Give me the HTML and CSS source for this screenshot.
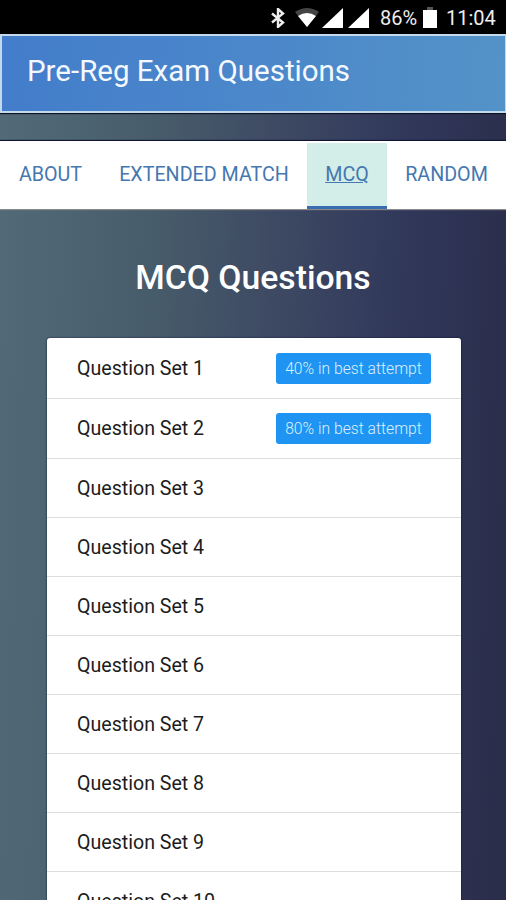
FILE: index.html
```html
<!DOCTYPE html>
<html lang="en">
<head>
  <meta charset="UTF-8" />
  <title>Pre-Reg Exam Questions</title>
  <link rel="stylesheet" href="styles.css">
</head>
<body>

<div class="statusbar">
  <svg class="bluetooth" width="14" height="20" viewBox="0 0 14 20"><path d="M1 5.5l11 9-5 4.5V1l5 4.5-11 9" fill="none" stroke="#eee" stroke-width="2.4" /></svg>
  <svg class="wifi" width="24" height="19" viewBox="0 0 24 19"><path d="M0 4Q12-4 24 4L12 19z" fill="#444" /><path d="M3 8Q12 2 21 8L12 19z" fill="#fff" /></svg>
  <svg class="signal" width="21" height="20" viewBox="0 0 21 20"><path d="M0 20L21 0v20z" fill="#fff" /></svg>
  <svg class="signal" width="21" height="20" viewBox="0 0 21 20"><path d="M0 20L21 0v20z" fill="#fff" /></svg>
  <span class="percent">86%</span>
  <svg class="battery" width="14" height="21" viewBox="0 0 14 21"><path d="M4 0h6v3H4z" fill="#555" /><path d="M0 3h14v18H0z" fill="#fff" /></svg>
  <span class="clock">11:04</span>
</div>

<header>Pre-Reg Exam Questions</header>

<nav>
  <a class="tab about">ABOUT</a>
  <a class="tab match">EXTENDED MATCH</a>
  <a class="tab mcq active">MCQ</a>
  <a class="tab random">RANDOM</a>
</nav>

<h1>MCQ Questions</h1>

<ul class="sets">
  <li class="tried">Question Set 1 <span class="badge">40% in best attempt</span></li>
  <li class="tried">Question Set 2 <span class="badge">80% in best attempt</span></li>
  <li>Question Set 3</li>
  <li>Question Set 4</li>
  <li>Question Set 5</li>
  <li>Question Set 6</li>
  <li>Question Set 7</li>
  <li>Question Set 8</li>
  <li>Question Set 9</li>
  <li>Question Set 10</li>
</ul>

</body>
</html>
```
FILE: styles.css
```css
* {
  box-sizing: border-box;
}
html {
  height: 900px;
  overflow: hidden;
}
body {
  margin: 0;
  height: 900px;
  overflow: hidden;
  font-family: Roboto, sans-serif;
  background: linear-gradient(92deg, #526b77 0%, #475c6b 30%, #3e4a63 52%, #30375a 78%, #2a2d49 100%);
}
.statusbar {
  display: flex;
  align-items: center;
  height: 34px;
  padding: 1px 0 0 271px;
  background: #000;
  color: #eee;
  font-size: 20px;
  white-space: nowrap;
}
.wifi {
  margin-left: 10px;
}
.signal {
  margin-left: 3px;
}
.signal + .signal {
  margin-left: 5px;
}
.percent {
  margin-left: 11px;
  width: 38px;
}
.battery {
  margin-left: 5px;
}
.clock {
  margin-left: 9px;
}
header {
  display: flex;
  align-items: center;
  height: 79px;
  padding: 0 25px 6px;
  border: 2px solid #c3d9ec;
  border-right-width: 1px;
  background: linear-gradient(95deg, #437dcb, #4b87ca 50%, #5493c8);
  box-shadow: 0 1px 1px #101426;
  color: #f4f9ff;
  font-size: 29.5px;
}
nav {
  display: flex;
  height: 68px;
  margin-top: 28px;
  background: #fff;
  box-shadow: 0 -1px 1px #111535, 0 1px 1px #888;
}
.tab {
  padding-top: 22px;
  height: 67px;
  color: #4577b0;
  font-size: 19.7px;
  line-height: 23px;
  text-align: center;
  white-space: nowrap;
}
.about {
  width: 101px;
}
.match {
  width: 206px;
}
.mcq {
  width: 80px;
}
.random {
  width: 119px;
}
.active {
  margin-top: 2px;
  padding-top: 20px;
  height: 66px;
  background: #d3ede8;
  border-bottom: 3px solid #3a6db0;
  text-decoration: underline;
}
h1 {
  margin: 49px 0 40px;
  color: #fff;
  font-size: 33.7px;
  font-weight: 500;
  line-height: 40px;
  text-align: center;
}
.sets {
  width: 414px;
  margin: 0 0 0 47px;
  padding: 0;
  list-style: none;
  background: #fff;
  border-radius: 3px 3px 0 0;
  box-shadow: 0 0 2px #0c1238;
}
.sets li {
  display: flex;
  align-items: center;
  justify-content: space-between;
  height: 59px;
  padding: 0 30px;
  border-bottom: 1px solid #ddd;
  color: #1c1c1c;
  font-size: 19.6px;
}
.sets .tried {
  height: 60px;
  padding-bottom: 1px;
}
.sets .tried:first-child {
  height: 61px;
  padding-bottom: 0;
}
.badge {
  width: 155px;
  height: 31px;
  border-radius: 3px;
  background: #2094f3;
  color: #d9f1ff;
  font-size: 15.7px;
  font-weight: 300;
  line-height: 31px;
  text-align: center;
}
```
